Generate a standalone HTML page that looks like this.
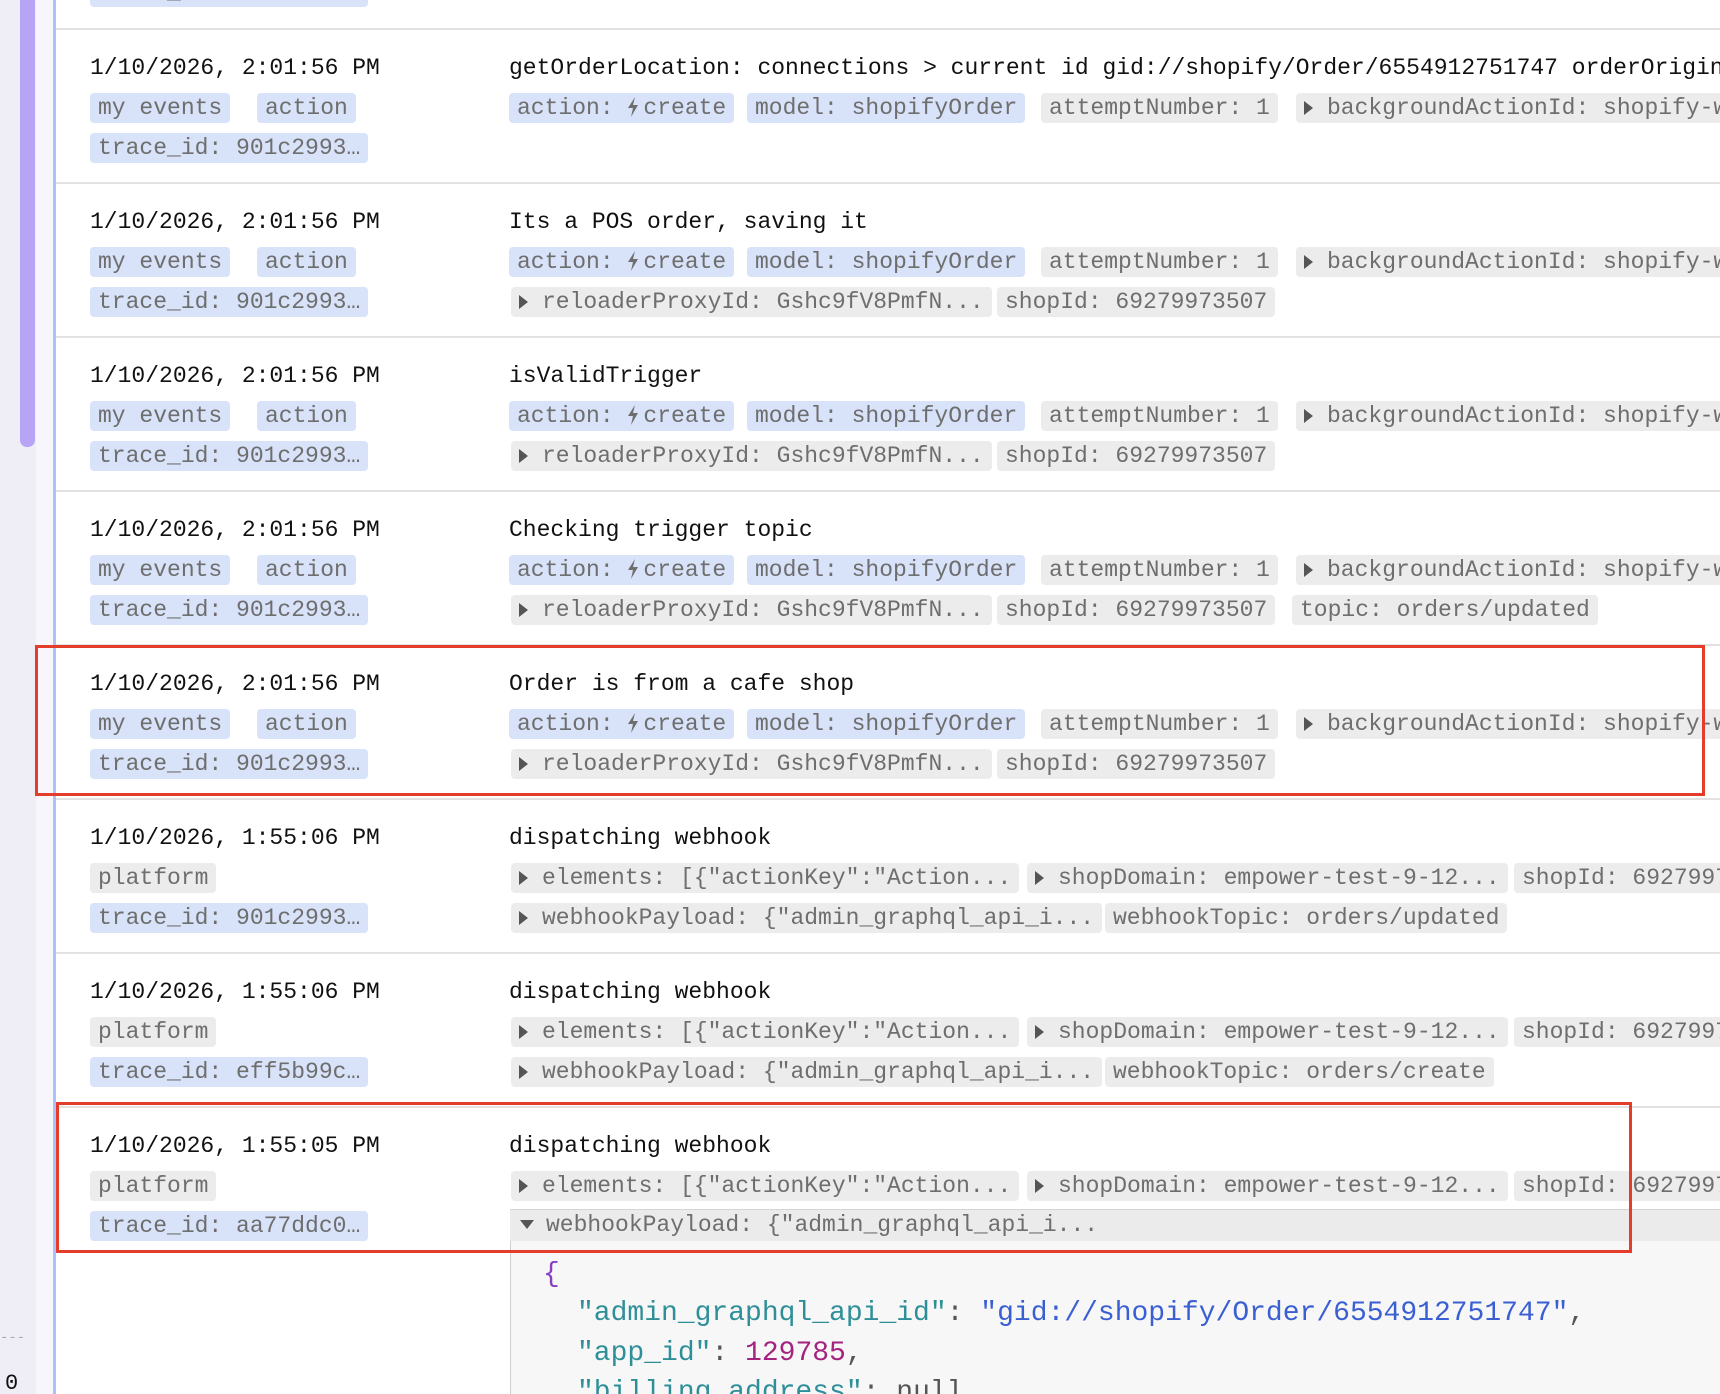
<!DOCTYPE html>
<html><head><meta charset="utf-8"><style>
*{margin:0;padding:0;box-sizing:border-box}
html,body{width:1720px;height:1394px;overflow:hidden}
body{background:#fff;position:relative;font-family:"Liberation Mono","DejaVu Sans Mono",monospace;font-size:23px;color:#111}
#w{position:absolute;left:0;top:0;width:1720px;height:1394px;overflow:hidden}
.gut{position:absolute;left:0;top:0;width:53px;height:1394px;background:#efeef6}
.gut2{position:absolute;left:36px;top:0;width:17px;height:1394px;background:#f7f6fc}
.sb{position:absolute;left:20px;top:-10px;width:15px;height:457px;background:#b8a4f4;border-radius:0 0 7px 7px}
.bl{position:absolute;left:53px;top:0;width:3px;height:1394px;background:#a9c3f6}
.sep{position:absolute;left:56px;right:0;height:2px;background:#e2e2e2}
.t{position:absolute;white-space:nowrap;line-height:28px;margin-top:2px}
.g{position:absolute;white-space:nowrap;height:30px;line-height:30px;padding:0 8px;border-radius:4px;color:#6e6e6e;background:#ececec;margin-top:2px}
.b{background:#d8e2f8}
.tri{display:inline-block;width:0;height:0;border-left:9px solid #555;border-top:7px solid transparent;border-bottom:7px solid transparent;margin-right:14px;vertical-align:-1px}
.trd{display:inline-block;width:0;height:0;border-top:9px solid #555;border-left:7px solid transparent;border-right:7px solid transparent;margin-right:12px;vertical-align:2px}
.bolt{display:inline-block;width:12px;height:20px;vertical-align:-3px;margin-right:4px}
.red{position:absolute;border:3px solid #e53d2b}
.k{color:#2e8f99}.s{color:#3a5fd3}.n{color:#a3237f}.p{color:#555}.br{color:#8a3fbf}
.j{position:absolute;white-space:nowrap;font-size:28px;line-height:34px}
</style></head><body><div id="w">
<div class="gut"></div><div class="gut2"></div><div class="sb"></div><div class="bl"></div>
<div class="t" style="left:0;top:1322px;color:#aaa;font-size:14px">---</div>
<div class="t" style="left:5px;top:1368px;font-size:22px">0</div>

<div class="g b" style="left:90px;top:-25px">trace_id: 901c2993…</div>

<div class="sep" style="top:28px"></div><div class="sep" style="top:182px"></div><div class="sep" style="top:336px"></div><div class="sep" style="top:490px"></div><div class="sep" style="top:644px"></div><div class="sep" style="top:798px"></div><div class="sep" style="top:952px"></div><div class="sep" style="top:1106px"></div>

<!-- Row 1 -->
<div class="t" style="left:90px;top:52px">1/10/2026, 2:01:56 PM</div>
<div class="t" style="left:509px;top:52px">getOrderLocation: connections &gt; current id gid://shopify/Order/6554912751747 orderOrigin</div>
<div class="g b" style="left:90px;top:91px">my events</div><div class="g b" style="left:257px;top:91px">action</div>
<div class="g b" style="left:90px;top:131px">trace_id: 901c2993…</div>
<div class="g b" style="left:509px;top:91px">action: <svg class="bolt" viewBox="0 0 12 20"><path d="M8 0 L1 11 H6 L4 20 L11 8 H6 Z" fill="#6e6e6e"/></svg>create</div>
<div class="g b" style="left:747px;top:91px">model: shopifyOrder</div>
<div class="g" style="left:1041px;top:91px">attemptNumber: 1</div>
<div class="g" style="left:1296px;top:91px"><span class="tri"></span>backgroundActionId: shopify-webhook</div>

<!-- Row 2 -->
<div class="t" style="left:90px;top:206px">1/10/2026, 2:01:56 PM</div>
<div class="t" style="left:509px;top:206px">Its a POS order, saving it</div>
<div class="g b" style="left:90px;top:245px">my events</div><div class="g b" style="left:257px;top:245px">action</div>
<div class="g b" style="left:90px;top:285px">trace_id: 901c2993…</div>
<div class="g b" style="left:509px;top:245px">action: <svg class="bolt" viewBox="0 0 12 20"><path d="M8 0 L1 11 H6 L4 20 L11 8 H6 Z" fill="#6e6e6e"/></svg>create</div>
<div class="g b" style="left:747px;top:245px">model: shopifyOrder</div>
<div class="g" style="left:1041px;top:245px">attemptNumber: 1</div>
<div class="g" style="left:1296px;top:245px"><span class="tri"></span>backgroundActionId: shopify-webhook</div>
<div class="g" style="left:511px;top:285px"><span class="tri"></span>reloaderProxyId: Gshc9fV8PmfN...</div>
<div class="g" style="left:997px;top:285px">shopId: 69279973507</div>

<!-- Row 3 -->
<div class="t" style="left:90px;top:360px">1/10/2026, 2:01:56 PM</div>
<div class="t" style="left:509px;top:360px">isValidTrigger</div>
<div class="g b" style="left:90px;top:399px">my events</div><div class="g b" style="left:257px;top:399px">action</div>
<div class="g b" style="left:90px;top:439px">trace_id: 901c2993…</div>
<div class="g b" style="left:509px;top:399px">action: <svg class="bolt" viewBox="0 0 12 20"><path d="M8 0 L1 11 H6 L4 20 L11 8 H6 Z" fill="#6e6e6e"/></svg>create</div>
<div class="g b" style="left:747px;top:399px">model: shopifyOrder</div>
<div class="g" style="left:1041px;top:399px">attemptNumber: 1</div>
<div class="g" style="left:1296px;top:399px"><span class="tri"></span>backgroundActionId: shopify-webhook</div>
<div class="g" style="left:511px;top:439px"><span class="tri"></span>reloaderProxyId: Gshc9fV8PmfN...</div>
<div class="g" style="left:997px;top:439px">shopId: 69279973507</div>

<!-- Row 4 -->
<div class="t" style="left:90px;top:514px">1/10/2026, 2:01:56 PM</div>
<div class="t" style="left:509px;top:514px">Checking trigger topic</div>
<div class="g b" style="left:90px;top:553px">my events</div><div class="g b" style="left:257px;top:553px">action</div>
<div class="g b" style="left:90px;top:593px">trace_id: 901c2993…</div>
<div class="g b" style="left:509px;top:553px">action: <svg class="bolt" viewBox="0 0 12 20"><path d="M8 0 L1 11 H6 L4 20 L11 8 H6 Z" fill="#6e6e6e"/></svg>create</div>
<div class="g b" style="left:747px;top:553px">model: shopifyOrder</div>
<div class="g" style="left:1041px;top:553px">attemptNumber: 1</div>
<div class="g" style="left:1296px;top:553px"><span class="tri"></span>backgroundActionId: shopify-webhook</div>
<div class="g" style="left:511px;top:593px"><span class="tri"></span>reloaderProxyId: Gshc9fV8PmfN...</div>
<div class="g" style="left:997px;top:593px">shopId: 69279973507</div>
<div class="g" style="left:1292px;top:593px">topic: orders/updated</div>

<!-- Row 5 -->
<div class="t" style="left:90px;top:668px">1/10/2026, 2:01:56 PM</div>
<div class="t" style="left:509px;top:668px">Order is from a cafe shop</div>
<div class="g b" style="left:90px;top:707px">my events</div><div class="g b" style="left:257px;top:707px">action</div>
<div class="g b" style="left:90px;top:747px">trace_id: 901c2993…</div>
<div class="g b" style="left:509px;top:707px">action: <svg class="bolt" viewBox="0 0 12 20"><path d="M8 0 L1 11 H6 L4 20 L11 8 H6 Z" fill="#6e6e6e"/></svg>create</div>
<div class="g b" style="left:747px;top:707px">model: shopifyOrder</div>
<div class="g" style="left:1041px;top:707px">attemptNumber: 1</div>
<div class="g" style="left:1296px;top:707px"><span class="tri"></span>backgroundActionId: shopify-webhook</div>
<div class="g" style="left:511px;top:747px"><span class="tri"></span>reloaderProxyId: Gshc9fV8PmfN...</div>
<div class="g" style="left:997px;top:747px">shopId: 69279973507</div>

<!-- Row 6 -->
<div class="t" style="left:90px;top:822px">1/10/2026, 1:55:06 PM</div>
<div class="t" style="left:509px;top:822px">dispatching webhook</div>
<div class="g" style="left:90px;top:861px">platform</div>
<div class="g b" style="left:90px;top:901px">trace_id: 901c2993…</div>
<div class="g" style="left:511px;top:861px"><span class="tri"></span>elements: [{"actionKey":"Action...</div>
<div class="g" style="left:1027px;top:861px"><span class="tri"></span>shopDomain: empower-test-9-12...</div>
<div class="g" style="left:1514px;top:861px">shopId: 69279973507</div>
<div class="g" style="left:511px;top:901px"><span class="tri"></span>webhookPayload: {"admin_graphql_api_i...</div>
<div class="g" style="left:1105px;top:901px">webhookTopic: orders/updated</div>

<!-- Row 7 -->
<div class="t" style="left:90px;top:976px">1/10/2026, 1:55:06 PM</div>
<div class="t" style="left:509px;top:976px">dispatching webhook</div>
<div class="g" style="left:90px;top:1015px">platform</div>
<div class="g b" style="left:90px;top:1055px">trace_id: eff5b99c…</div>
<div class="g" style="left:511px;top:1015px"><span class="tri"></span>elements: [{"actionKey":"Action...</div>
<div class="g" style="left:1027px;top:1015px"><span class="tri"></span>shopDomain: empower-test-9-12...</div>
<div class="g" style="left:1514px;top:1015px">shopId: 69279973507</div>
<div class="g" style="left:511px;top:1055px"><span class="tri"></span>webhookPayload: {"admin_graphql_api_i...</div>
<div class="g" style="left:1105px;top:1055px">webhookTopic: orders/create</div>

<!-- Row 8 -->
<div class="t" style="left:90px;top:1130px">1/10/2026, 1:55:05 PM</div>
<div class="t" style="left:509px;top:1130px">dispatching webhook</div>
<div class="g" style="left:90px;top:1169px">platform</div>
<div class="g b" style="left:90px;top:1209px">trace_id: aa77ddc0…</div>
<div class="g" style="left:511px;top:1169px"><span class="tri"></span>elements: [{"actionKey":"Action...</div>
<div class="g" style="left:1027px;top:1169px"><span class="tri"></span>shopDomain: empower-test-9-12...</div>
<div class="g" style="left:1514px;top:1169px">shopId: 69279973507</div>
<div style="position:absolute;left:510px;right:0;top:1209px;height:186px;background:#f7f7f7;border-left:1px solid #cfcfcf"></div>
<div class="g" style="left:510px;right:0;top:1207px;height:32px;border-radius:0;border-top:1px solid #d5d5d5;background:#ebebeb;padding-left:10px"><span class="trd"></span>webhookPayload: {"admin_graphql_api_i...</div>
<div class="j" style="left:543px;top:1258px"><span class="br">{</span></div>
<div class="j" style="left:577px;top:1297px"><span class="k">"admin_graphql_api_id"</span><span class="p">: </span><span class="s">"gid://shopify/Order/6554912751747"</span><span class="p">,</span></div>
<div class="j" style="left:577px;top:1337px"><span class="k">"app_id"</span><span class="p">: </span><span class="n">129785</span><span class="p">,</span></div>
<div class="j" style="left:577px;top:1376px"><span class="k">"billing_address"</span><span class="p">: null</span></div>

<div class="red" style="left:35px;top:645px;width:1670px;height:151px"></div>
<div class="red" style="left:56px;top:1102px;width:1576px;height:151px"></div>
</div></body></html>
